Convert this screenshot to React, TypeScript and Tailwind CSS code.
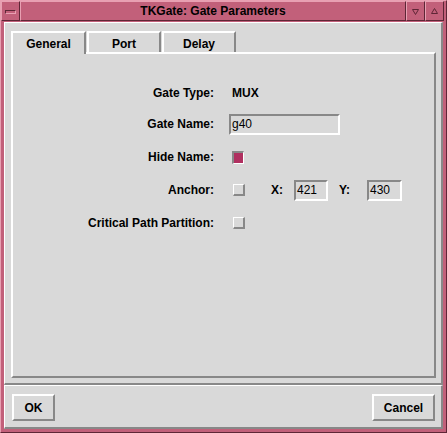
import React from "react";

const font = { fontFamily: '"Liberation Sans", Arial, Helvetica, sans-serif' };

function CheckBox({ checked }: { checked?: boolean }) {
  if (checked) {
    return (
      <div className="w-[12px] h-[13px] border-t-2 border-l-2 border-b border-r border-t-[#888888] border-l-[#888888] border-b-white border-r-white bg-[#b03060]" />
    );
  }
  return (
    <div className="w-[12px] h-[12px] border-t border-l border-b-2 border-r-2 border-t-white border-l-white border-b-[#888888] border-r-[#888888] bg-[#d9d9d9]" />
  );
}

function Entry({ value, w }: { value: string; w: string }) {
  return (
    <div
      className={`${w} h-[21px] border-2 border-t-[#888888] border-l-[#888888] border-b-white border-r-white bg-[#d9d9d9] flex items-center pl-px text-[12px] text-black leading-none`}
    >
      {value}
    </div>
  );
}

function Row({ label, h, children }: { label: string; h: string; children?: React.ReactNode }) {
  return (
    <div className={`flex items-center ${h}`}>
      <div className="w-[201px] text-right font-bold text-[12px] leading-none">{label}</div>
      <div className="ml-[15px] flex items-center">{children}</div>
    </div>
  );
}

export default function App() {
  return (
    <div
      style={font}
      className="w-[447px] h-[433px] bg-[#c2607a] border border-t-[#e8a0b2] border-l-[#e8a0b2] border-b-[#5e2636] border-r-[#5e2636] flex flex-col text-black"
    >
      {/* title bar */}
      <div className="flex h-[20px] shrink-0">
        <div className="w-[19px] h-[20px] border border-t-[#e8a0b2] border-l-[#e8a0b2] border-b-[#5e2636] border-r-[#5e2636] flex items-center justify-center">
          <div className="w-[11px] h-[4px] border border-t-[#5e2636] border-l-[#5e2636] border-b-[#e8a0b2] border-r-[#e8a0b2] mt-[2px]" />
        </div>
        <div className="w-[386px] h-[20px] border border-t-[#e8a0b2] border-l-[#e8a0b2] border-b-[#5e2636] border-r-[#5e2636] flex items-center justify-center font-bold text-[12px] leading-none">
          TKGate: Gate Parameters
        </div>
        <div className="w-[19px] h-[20px] border border-t-[#e8a0b2] border-l-[#e8a0b2] border-b-[#5e2636] border-r-[#5e2636] flex items-center justify-center">
          <svg width="7" height="7" viewBox="0 0 7 7">
            <path d="M0.5 1.5 L6.5 1.5 L3.5 6.5 Z" fill="none" stroke="#5e2636" strokeWidth="1" />
          </svg>
        </div>
        <div className="w-[19px] h-[20px] border border-t-[#e8a0b2] border-l-[#e8a0b2] border-b-[#5e2636] border-r-[#5e2636] flex items-center justify-center">
          <svg width="7" height="7" viewBox="0 0 7 7">
            <path d="M3.5 0.5 L6.5 5.5 L0.5 5.5 Z" fill="none" stroke="#5e2636" strokeWidth="1" />
          </svg>
        </div>
      </div>

      {/* body */}
      <div className="mt-px mx-[3px] h-[407px] bg-[#d9d9d9] flex flex-col">
        {/* top frame */}
        <div className="h-[363px] shrink-0 border-t border-l border-b-2 border-r-2 border-t-white border-l-white border-b-[#888888] border-r-[#888888] pt-[8px] pl-[6px] pr-[5px] pb-[5px] flex flex-col">
          <div className="flex items-end h-[21px] shrink-0">
            <div className="relative z-10 w-[75px] h-[23px] -mb-[2px] bg-[#d9d9d9] border-t-2 border-l-2 border-r-2 border-t-white border-l-white border-r-[#888888] flex justify-center pt-[5px] font-bold text-[12px] leading-none">
              General
            </div>
            <div className="ml-px w-[74px] h-[21px] border-t-2 border-l-2 border-r-2 border-t-white border-l-white border-r-[#888888] flex justify-center pt-[5px] font-bold text-[12px] leading-none">
              Port
            </div>
            <div className="ml-px w-[74px] h-[21px] border-t-2 border-l-2 border-r-2 border-t-white border-l-white border-r-[#888888] flex justify-center pt-[5px] font-bold text-[12px] leading-none">
              Delay
            </div>
          </div>
          <div className="flex-1 border-t-2 border-l-2 border-b-2 border-r-2 border-t-white border-l-white border-b-[#888888] border-r-[#888888] pt-[24px]">
            <Row label="Gate Type:" h="h-[30px]">
              <span className="ml-[3px] font-bold text-[12px] leading-none">MUX</span>
            </Row>
            <Row label="Gate Name:" h="h-[32px]">
              <Entry value="g40" w="w-[111px]" />
            </Row>
            <Row label="Hide Name:" h="h-[34px]">
              <div className="ml-[3px]">
                <CheckBox checked />
              </div>
            </Row>
            <Row label="Anchor:" h="h-[32px]">
              <div className="ml-[4px]">
                <CheckBox />
              </div>
              <span className="ml-[26px] font-bold text-[12px] leading-none w-[23px]">X:</span>
              <Entry value="421" w="w-[34px]" />
              <span className="ml-[11px] font-bold text-[12px] leading-none w-[28px]">Y:</span>
              <Entry value="430" w="w-[35px]" />
            </Row>
            <Row label="Critical Path Partition:" h="h-[34px]">
              <div className="ml-[4px]">
                <CheckBox />
              </div>
            </Row>
          </div>
        </div>
        {/* bottom frame */}
        <div className="flex-1 border-t border-l border-b-2 border-r-2 border-t-white border-l-white border-b-[#888888] border-r-[#888888] flex justify-between items-start pt-[8px] pl-[7px] pr-[6px]">
          <div className="w-[43px] h-[27px] border-2 border-t-white border-l-white border-b-[#888888] border-r-[#888888] flex items-center justify-center font-bold text-[12px] leading-none">
            OK
          </div>
          <div className="w-[63px] h-[27px] border-2 border-t-white border-l-white border-b-[#888888] border-r-[#888888] flex items-center justify-center font-bold text-[12px] leading-none">
            Cancel
          </div>
        </div>
      </div>
    </div>
  );
}
